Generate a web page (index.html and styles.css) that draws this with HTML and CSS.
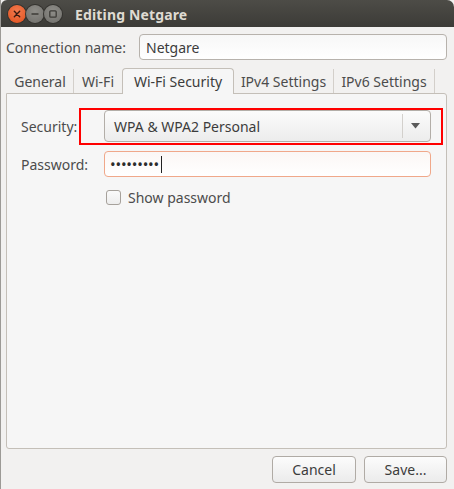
FILE: index.html
```html
<!DOCTYPE html>
<html>
<head>
<meta charset="utf-8">
<link rel="stylesheet" href="styles.css">
</head>
<body>
<div class="window">
  <div class="titlebar">
    <div class="controls">
      <span class="wbtn close"><svg width="18" height="18" viewBox="0 0 18 18"><path d="M6.3 6.3 L11.7 11.7 M11.7 6.3 L6.3 11.7" stroke="#3a1a10" stroke-width="1.4" stroke-linecap="round"/></svg></span>
      <span class="wbtn"><svg width="18" height="18" viewBox="0 0 18 18"><path d="M5.5 9 H12.5" stroke="#3c3b37" stroke-width="1.5"/></svg></span>
      <span class="wbtn"><svg width="18" height="18" viewBox="0 0 18 18"><rect x="5.8" y="5.8" width="6.4" height="6.4" rx="1" fill="none" stroke="#3c3b37" stroke-width="1.3"/></svg></span>
    </div>
    <div class="title">Editing Netgare</div>
  </div>
  <div class="content">
    <div class="row-name">
      <label class="lbl">Connection name:</label>
      <div class="entry name-entry">Netgare</div>
    </div>
    <div class="notebook">
      <div class="tabs">
        <div class="tab t1">General</div>
        <div class="tab t2">Wi-Fi</div>
        <div class="tab active t3">Wi-Fi Security</div>
        <div class="tab t4">IPv4 Settings</div>
        <div class="tab t5">IPv6 Settings</div>
      </div>
      <div class="panel">
        <div class="form-row sec-row">
          <label class="lbl">Security:</label>
          <div class="combo">
            <span class="combo-text">WPA &amp; WPA2 Personal</span>
            <span class="combo-sep"></span>
            <svg class="combo-arrow" width="9" height="6" viewBox="0 0 9 6"><path d="M0 0 H9 L4.5 5.5 Z" fill="#5a5a5a"/></svg>
          </div>
          <div class="highlight"></div>
        </div>
        <div class="form-row pw-row">
          <label class="lbl">Password:</label>
          <div class="entry pw-entry"><span class="dots">•••••••••</span><span class="caret"></span></div>
        </div>
        <div class="check-row">
          <span class="checkbox"></span>
          <span class="check-label">Show password</span>
        </div>
      </div>
    </div>
    <div class="actions">
      <div class="btn">Cancel</div>
      <div class="btn">Save...</div>
    </div>
  </div>
</div>
</body>
</html>
```

FILE: styles.css
```css
html, body {
  margin: 0;
  padding: 0;
  background: #f2f1f0;
}
body {
  width: 454px;
  height: 489px;
  overflow: hidden;
  font-family: "Noto Sans", "Open Sans", "DejaVu Sans", sans-serif;
  font-size: 14px;
  color: #3c3c3c;
}
.window {
  height: 489px;
  border-left: 1px solid #9c9a96;
  background: #f2f1f0;
  box-sizing: border-box;
}
.titlebar {
  height: 27px;
  background: linear-gradient(#4d4c47, #3c3b37);
  border-radius: 6px 7px 0 0;
  display: flex;
  align-items: center;
  padding-left: 7px;
}
.controls {
  display: flex;
  gap: 0;
}
.wbtn {
  width: 18px;
  height: 18px;
  border-radius: 50%;
  background: radial-gradient(circle at 50% 35%, #8e8d88, #6f6e6a);
  box-shadow: 0 0 0 1px #34332f;
  display: flex;
}
.wbtn.close {
  background: radial-gradient(circle at 50% 35%, #f47b4f, #e04f1c);
}
.title {
  margin-left: 13px;
  color: #dfdbd2;
  font-weight: bold;
  font-size: 14px;
  letter-spacing: 0.15px;
  padding-top: 1px;
}
.content {
  padding: 7px 7px 0 5px;
}
.row-name {
  display: flex;
  align-items: center;
  height: 26px;
}
.lbl {
  color: #4c4c4c;
}
.entry {
  box-sizing: border-box;
  height: 26px;
  border: 1px solid #b7b2ac;
  border-radius: 4px;
  background: linear-gradient(#f7f7f7, #ffffff);
  display: flex;
  align-items: center;
  padding-left: 6px;
  color: #3c3c3c;
}
.name-entry {
  margin-left: auto;
  width: 308px;
}
.notebook {
  margin-top: 8px;
}
.tabs {
  display: flex;
  align-items: flex-end;
  height: 25px;
  padding-left: 1px;
}
.tab {
  box-sizing: border-box;
  height: 24px;
  display: flex;
  align-items: center;
  justify-content: center;
  border-right: 1px solid #d3cfca;
  color: #4c4c4c;
}
.t1 { width: 67px; }
.t2 { width: 48px; border-right: none; }
.t4 { width: 100px; }
.t5 { width: 101px; }
.tab.active {
  width: 112px;
  height: 26px;
  background: #f6f6f6;
  border: 1px solid #c4bfb8;
  border-bottom: none;
  border-radius: 4px 4px 0 0;
  margin-bottom: -1px;
  position: relative;
  z-index: 1;
  color: #3c3c3c;
}
.panel {
  box-sizing: border-box;
  width: 441px;
  height: 356px;
  background: #f6f6f6;
  border: 1px solid #c4bfb8;
  border-radius: 0 3px 3px 3px;
  padding: 16px 14px 0 14px;
}
.form-row {
  display: flex;
  align-items: center;
  position: relative;
}
.form-row .lbl {
  width: 83px;
}
.combo {
  box-sizing: border-box;
  width: 327px;
  height: 32px;
  border: 1px solid #b3aea8;
  border-radius: 4px;
  background: linear-gradient(#fbfbfb, #ececec);
  display: flex;
  align-items: center;
  padding-left: 9px;
  color: #3c3c3c;
}
.combo-text {
  flex: 1;
}
.combo-sep {
  width: 1px;
  height: 24px;
  background: #d3d0cc;
  margin-right: 8px;
}
.combo-arrow {
  margin-right: 10px;
}
.highlight {
  position: absolute;
  left: 58px;
  top: -2px;
  width: 364px;
  height: 37px;
  box-sizing: border-box;
  border: 2px solid #ff0000;
  z-index: 2;
  pointer-events: none;
}
.pw-row {
  margin-top: 9px;
}
.pw-entry {
  width: 327px;
  border-color: #f0a88a;
  background: linear-gradient(#fbf7f5, #ffffff);
  padding-left: 5px;
}
.dots {
  font-size: 15px;
  letter-spacing: -0.2px;
  color: #2c2c2c;
}
.caret {
  width: 1px;
  height: 17px;
  background: #222;
  margin-left: 2px;
}
.check-row {
  display: flex;
  align-items: center;
  margin-top: 11px;
  margin-left: 85px;
}
.checkbox {
  box-sizing: border-box;
  width: 15px;
  height: 15px;
  border: 1px solid #a6a19b;
  border-radius: 3px;
  background: linear-gradient(#fafafa, #ededed);
}
.check-label {
  margin-left: 7px;
  color: #4c4c4c;
}
.actions {
  display: flex;
  justify-content: flex-end;
  gap: 8px;
  margin-top: 7px;
}
.btn {
  box-sizing: border-box;
  height: 27px;
  border: 1px solid #b0aba5;
  border-radius: 4px;
  background: linear-gradient(#fcfcfc, #ebebeb);
  display: flex;
  align-items: center;
  justify-content: center;
  color: #3c3c3c;
}
.actions .btn:first-child { width: 84px; }
.actions .btn:last-child { width: 83px; }
```
